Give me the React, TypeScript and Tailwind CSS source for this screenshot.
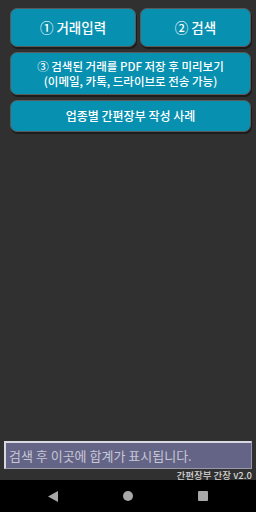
import { ReactNode } from "react";

const font = { fontFamily: '"Noto Sans CJK KR", "Noto Sans", sans-serif' };

const TealButton = ({ className, children }: { className: string; children: ReactNode }) => (
  <div
    className={`flex items-center justify-center rounded-[7px] border border-[#5a5a5a] bg-[#0790b0] text-white font-medium shadow-[1px_2px_0_#1c1c1c] ${className}`}
  >
    {children}
  </div>
);

const App = () => {
  return (
    <div className="w-[256px] h-[512px] flex flex-col bg-[#303030]" style={font}>
      <div className="flex flex-col gap-[5px] pt-[8px] pl-[10px] pr-[5px]">
        <div className="flex gap-[4px]">
          <TealButton className="w-[126px] h-[39px] text-[13.5px]">① 거래입력</TealButton>
          <TealButton className="flex-1 h-[39px] text-[13.5px]">② 검색</TealButton>
        </div>
        <TealButton className="h-[43px] flex-col text-[11.5px] leading-[15px]">
          <span>③ 검색된 거래를 PDF 저장 후 미리보기</span>
          <span>(이메일, 카톡, 드라이브로 전송 가능)</span>
        </TealButton>
        <TealButton className="h-[32px] text-[12px]">업종별 간편장부 작성 사례</TealButton>
      </div>

      <div className="flex-1" />

      <div className="px-[4px] pb-[2px]">
        <div className="h-[28px] flex items-center px-[3px] bg-[#646486] border-t-2 border-l-2 border-[#d8d8e0] border-b border-r border-b-[#9898a8] border-r-[#9898a8] text-[13px] text-[#c6c6d6]">
          검색 후 이곳에 합계가 표시됩니다.
        </div>
      </div>
      <div className="h-[9px] flex items-center justify-end pr-[4px] text-[9.5px] font-medium text-[#d4d4d4] leading-none">
        간편장부 간장 v2.0
      </div>

      <div className="h-[32px] bg-black flex items-center justify-between px-[48px]">
        <svg width="10" height="11" viewBox="0 0 10 11">
          <polygon points="10,0 10,11 0,5.5" fill="#a8a8a8" />
        </svg>
        <div className="w-[10px] h-[10px] rounded-full bg-[#a8a8a8]" />
        <div className="w-[10px] h-[10px] rounded-[1px] bg-[#a8a8a8]" />
      </div>
    </div>
  );
};

export default App;
